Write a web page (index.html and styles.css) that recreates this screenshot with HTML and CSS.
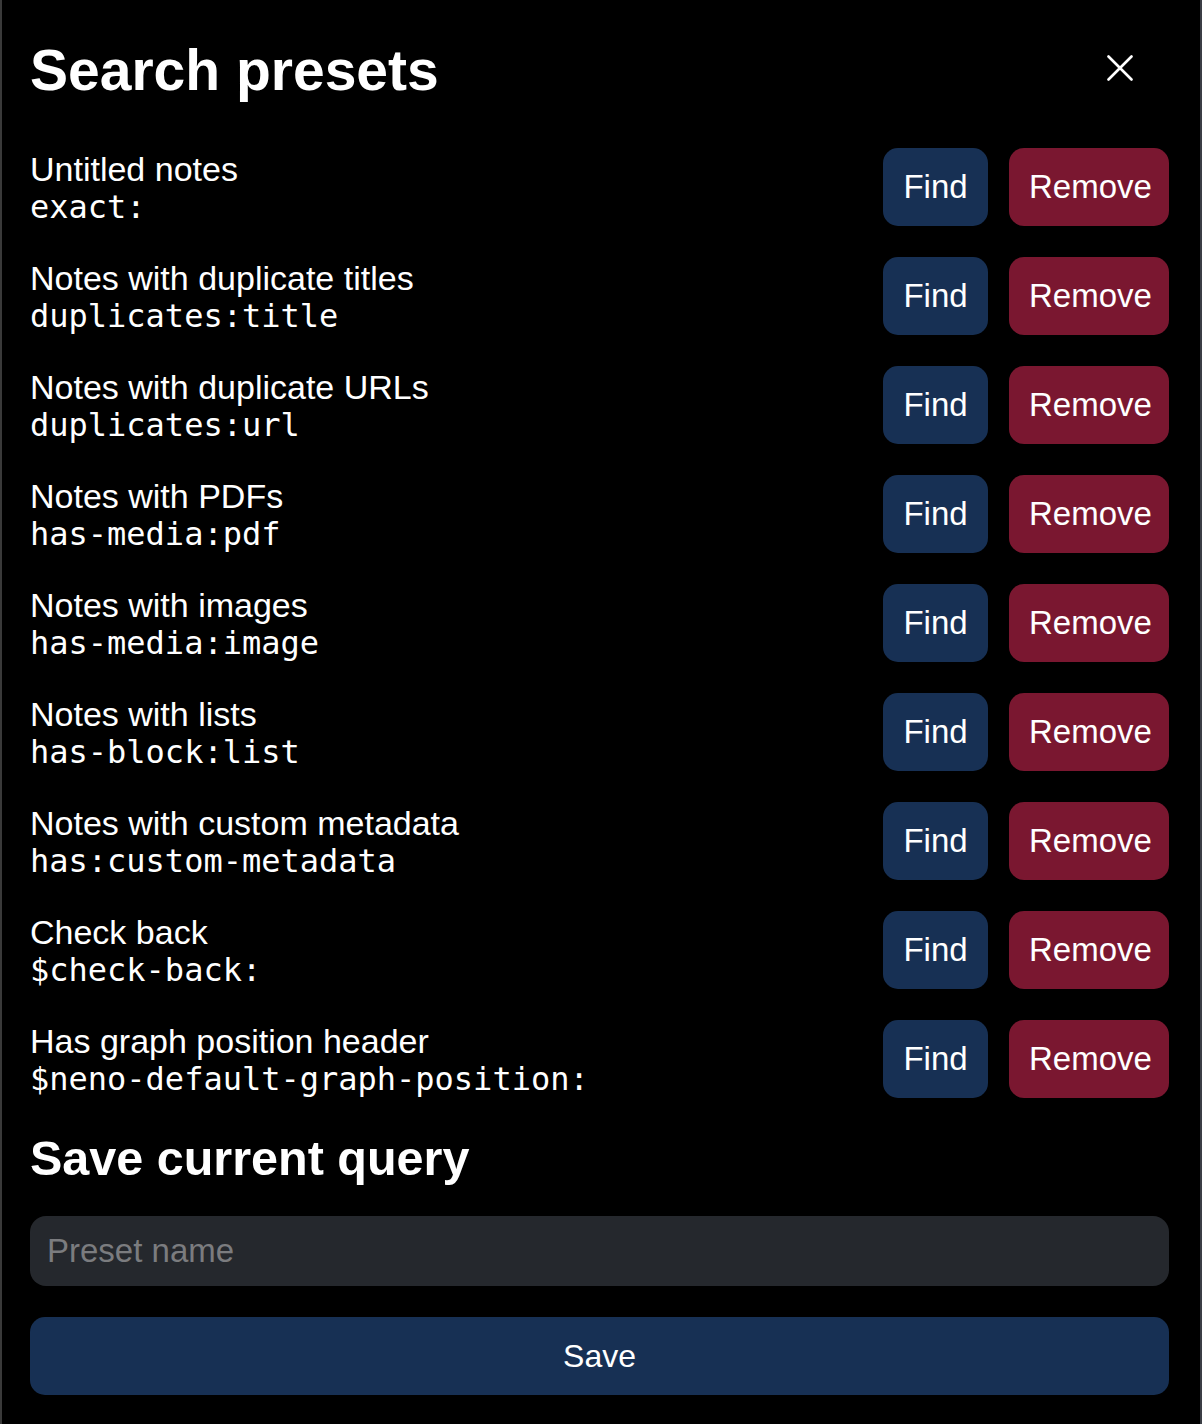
FILE: index.html
```html
<!DOCTYPE html>
<html lang="en">
<head>
<meta charset="utf-8">
<title>Search presets</title>
<link rel="stylesheet" href="styles.css">
</head>
<body>
<div class="dialog">
  <header class="header">
    <h1 class="title">Search presets</h1>
    <button class="close" aria-label="Close">
      <svg width="26" height="26" viewBox="0 0 26 26" fill="none" stroke="#fff" stroke-width="2.6" stroke-linecap="round"><path d="M1.5 1.5 L24.5 24.5 M24.5 1.5 L1.5 24.5"/></svg>
    </button>
  </header>
  <ul class="presets">
    <li class="preset"><div class="info"><div class="label">Untitled notes</div><div class="query">exact:</div></div><div class="actions"><button class="btn find">Find</button><button class="btn remove">Remove</button></div></li>
    <li class="preset"><div class="info"><div class="label">Notes with duplicate titles</div><div class="query">duplicates:title</div></div><div class="actions"><button class="btn find">Find</button><button class="btn remove">Remove</button></div></li>
    <li class="preset"><div class="info"><div class="label">Notes with duplicate URLs</div><div class="query">duplicates:url</div></div><div class="actions"><button class="btn find">Find</button><button class="btn remove">Remove</button></div></li>
    <li class="preset"><div class="info"><div class="label">Notes with PDFs</div><div class="query">has-media:pdf</div></div><div class="actions"><button class="btn find">Find</button><button class="btn remove">Remove</button></div></li>
    <li class="preset"><div class="info"><div class="label">Notes with images</div><div class="query">has-media:image</div></div><div class="actions"><button class="btn find">Find</button><button class="btn remove">Remove</button></div></li>
    <li class="preset"><div class="info"><div class="label">Notes with lists</div><div class="query">has-block:list</div></div><div class="actions"><button class="btn find">Find</button><button class="btn remove">Remove</button></div></li>
    <li class="preset"><div class="info"><div class="label">Notes with custom metadata</div><div class="query">has:custom-metadata</div></div><div class="actions"><button class="btn find">Find</button><button class="btn remove">Remove</button></div></li>
    <li class="preset"><div class="info"><div class="label">Check back</div><div class="query">$check-back:</div></div><div class="actions"><button class="btn find">Find</button><button class="btn remove">Remove</button></div></li>
    <li class="preset"><div class="info"><div class="label">Has graph position header</div><div class="query">$neno-default-graph-position:</div></div><div class="actions"><button class="btn find">Find</button><button class="btn remove">Remove</button></div></li>
  </ul>
  <h2 class="subtitle">Save current query</h2>
  <input class="name-input" type="text" placeholder="Preset name">
  <button class="btn save">Save</button>
</div>
</body>
</html>
```
FILE: styles.css
```css
* { box-sizing: border-box; }
html, body { margin: 0; padding: 0; background: #000; }
body {
  font-family: "Liberation Sans", Arial, sans-serif;
  color: #fff;
}
.dialog {
  width: 1202px;
  height: 1424px;
  border-left: 2px solid #3a3a3a;
  border-right: 2px solid #3b3e45;
  padding: 38px 31px 0 28px;
  display: flex;
  flex-direction: column;
}
.header {
  display: flex;
  align-items: center;
  justify-content: space-between;
  height: 64px;
}
.title {
  margin: 0;
  font-size: 57px;
  line-height: 64px;
  font-weight: 700;
}
.close {
  width: 48px;
  height: 48px;
  margin-right: 25px;
  margin-top: -4px;
  background: none;
  border: 0;
  padding: 0;
  display: flex;
  align-items: center;
  justify-content: center;
}
.presets {
  list-style: none;
  margin: 46px 0 0;
  padding: 0;
  display: flex;
  flex-direction: column;
  gap: 31px;
}
.preset {
  display: flex;
  align-items: center;
  justify-content: space-between;
  height: 78px;
}
.info { display: flex; flex-direction: column; padding-top: 2px; }
.label {
  font-size: 34px;
  line-height: 38px;
}
.query {
  font-family: "DejaVu Sans Mono", "Liberation Mono", monospace;
  font-size: 32px;
  line-height: 38px;
}
.actions {
  display: flex;
  gap: 21px;
}
.btn {
  font-family: "Liberation Sans", Arial, sans-serif;
  font-size: 33px;
  color: #fff;
  border: 0;
  height: 78px;
  padding: 0 20px;
  border-radius: 15px;
}
.find { background: #173054; width: 105px; }
.remove { background: #7a1730; width: 160px; }
.subtitle {
  margin: 32px 0 0;
  font-size: 48.5px;
  line-height: 56px;
  font-weight: 700;
}
.name-input {
  margin-top: 30px;
  width: 100%;
  height: 70px;
  background: #25282d;
  border: 0;
  border-radius: 16px;
  padding: 0 17px;
  font-family: "Liberation Sans", Arial, sans-serif;
  font-size: 33px;
  color: #fff;
  outline: none;
}
.name-input::placeholder { color: #7b7c7f; }
.save {
  margin-top: 31px;
  width: 100%;
  background: #173054;
  font-size: 32px;
}
```
